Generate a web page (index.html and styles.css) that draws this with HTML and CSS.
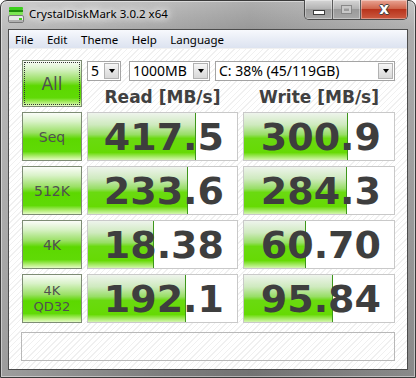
FILE: index.html
```html
<!DOCTYPE html>
<html lang="en">

<head>
    <meta charset="UTF-8">
    <title>CrystalDiskMark 3.0.2 x64</title>
    <link rel="stylesheet" href="styles.css">
</head>

<body>
    <div class="window">
        <div class="titlebar">
            <svg class="app-icon" width="17" height="17" viewBox="0 0 17 17">
                <rect x="1" y="1" width="14" height="3" rx="1" fill="#3ccf1c" />
                <rect x="1" y="4" width="14" height="2" fill="#1e8c0c" />
                <rect x="1" y="6" width="14" height="3" rx="1" fill="#7de654" />
                <rect x="0.5" y="9.5" width="15" height="7" rx="1.5" fill="#e8e8e8" stroke="#777" />
                <rect x="1" y="14" width="14" height="2" fill="#b0b0b0" />
                <rect x="11" y="12" width="3" height="2" fill="#3ccf1c" />
            </svg>
            <span class="title">CrystalDiskMark 3.0.2 x64</span>
            <div class="controls">
                <div class="ctl ctl-min"><span class="ico-min"></span></div>
                <div class="ctl ctl-max"><span class="ico-max"></span></div>
                <div class="ctl ctl-close"><span class="ico-close">x</span></div>
            </div>
        </div>
        <div class="inner">
            <div class="menubar">
                <span>File</span>
                <span>Edit</span>
                <span>Theme</span>
                <span>Help</span>
                <span>Language</span>
            </div>
            <div class="content">
                <div class="btn btn-all"><span class="focus">All</span></div>
                <div class="selects">
                    <div class="select sel-count"><span class="sel-text">5</span><span class="sel-btn"></span></div>
                    <div class="select sel-size"><span class="sel-text">1000MB</span><span class="sel-btn"></span></div>
                    <div class="select sel-drive"><span class="sel-text">C: 38% (45/119GB)</span><span class="sel-btn"></span></div>
                </div>
                <div class="head">Read [MB/s]</div>
                <div class="head">Write [MB/s]</div>

                <div class="btn">Seq</div>
                <div class="cell" style="--w:108px">417.5</div>
                <div class="cell" style="--w:104px">300.9</div>

                <div class="btn">512K</div>
                <div class="cell" style="--w:100px">233.6</div>
                <div class="cell" style="--w:103px">284.3</div>

                <div class="btn">4K</div>
                <div class="cell" style="--w:66px">18.38</div>
                <div class="cell" style="--w:62px">60.70</div>

                <div class="btn btn-small">4K<br>QD32</div>
                <div class="cell" style="--w:98px">192.1</div>
                <div class="cell" style="--w:89px">95.84</div>

                <div class="status"></div>
            </div>
        </div>
    </div>
</body>

</html>
```

FILE: styles.css
```css
body {
    margin: 0;
    background: #fff;
    font-family: 'Noto Sans', 'DejaVu Sans', sans-serif;
}

.window {
    width: 416px;
    height: 378px;
    box-sizing: border-box;
    border: 1px solid #3a3a3a;
    border-radius: 7px 7px 0 0;
    padding: 0 7px 7px;
    display: flex;
    flex-direction: column;
    background:
        linear-gradient(to right, rgba(255, 255, 255, 0.25), rgba(255, 255, 255, 0) 40%, rgba(0, 0, 0, 0.08) 60%, rgba(255, 255, 255, 0.1)),
        linear-gradient(#bdbdbd, #a4a4a4 30px, #8e8e8e 60%, #7c7c7c);
    box-shadow: inset 0 0 0 1px rgba(255, 255, 255, 0.45);
}

.titlebar {
    height: 28px;
    display: flex;
    align-items: flex-start;
}

.app-icon {
    margin-top: 5px;
    margin-right: 4px;
}

.title {
    margin-top: 5px;
    font-size: 11.5px;
    color: #000;
    text-shadow: 0 0 6px #fff, 0 0 10px #fff, 0 0 14px #fff;
}

.controls {
    margin-left: auto;
    margin-top: -1px;
    display: flex;
    height: 19px;
    border: 1px solid #4a4a4a;
    border-top: none;
    border-radius: 0 0 5px 5px;
    overflow: hidden;
}

.ctl {
    display: flex;
    align-items: center;
    justify-content: center;
    box-shadow: inset 0 0 0 1px rgba(255, 255, 255, 0.35);
}

.ctl-min,
.ctl-max {
    width: 27px;
    background: linear-gradient(#d6d6d6, #b4b4b4 45%, #9a9a9a 50%, #a8a8a8);
    border-right: 1px solid #5a5a5a;
}

.ctl-close {
    width: 46px;
    background: linear-gradient(#e9a594, #d0664c 45%, #b8341c 50%, #cc5a40);
}

.ico-min {
    width: 10px;
    height: 3px;
    margin-top: 6px;
    background: #fff;
    border: 1px solid #3c3c3c;
}

.ico-max {
    width: 9px;
    height: 7px;
    border: 1px solid #888;
    box-shadow: inset 0 0 0 2px #c8c8c8;
}

.ico-close {
    font-family: 'DejaVu Sans', sans-serif;
    font-weight: bold;
    font-size: 15px;
    line-height: 15px;
    color: #fff;
    text-shadow: 1px 0 0 #444, -1px 0 0 #444, 0 1px 0 #444, 0 -1px 0 #444;
}

.inner {
    flex: 1;
    border: 1px solid #4c4c4c;
    display: flex;
    flex-direction: column;
}

.menubar {
    height: 18px;
    display: flex;
    align-items: center;
    gap: 13.5px;
    padding-left: 6px;
    font-size: 11.5px;
    color: #000;
    background: linear-gradient(#f7f9fd, #e9edf6 50%, #dce3f0);
    border-bottom: 1px solid #f0f0f0;
}

.content {
    flex: 1;
    padding: 11px 0 0 13px;
    display: grid;
    grid-template-columns: 60px 151px 152px;
    grid-template-rows: 21px 21px 49px 49px 49px 49px 29px;
    gap: 5px;
    align-content: start;
    background: repeating-linear-gradient(135deg, #fff 0 3px, #f0f0f0 3px 4px);
}

.btn {
    box-sizing: border-box;
    border: 1px solid #7d8c74;
    display: flex;
    align-items: center;
    justify-content: center;
    text-align: center;
    font-family: 'DejaVu Sans', sans-serif;
    font-size: 14px;
    color: #505050;
    background: linear-gradient(#fbfdf9, #d9f2c8 18%, #9ae064 42%, #5cd800 55%, #60da06 82%, #b6ee7a 93%, #e4fcc6);
}

.btn-all {
    grid-row: 1 / 3;
    font-size: 17px;
    padding: 1px;
}

.focus {
    width: 100%;
    height: 100%;
    box-sizing: border-box;
    border: 1px dotted #333;
    display: flex;
    align-items: center;
    justify-content: center;
}

.btn-small {
    font-size: 13px;
    line-height: 16px;
}

.selects {
    grid-column: 2 / 4;
    display: flex;
    margin-top: 1px;
}

.select {
    height: 20px;
    box-sizing: border-box;
    border: 1px solid #a4a4a4;
    background: #fff;
    display: flex;
    align-items: center;
    padding: 1px;
}

.sel-count {
    width: 34px;
    margin-right: 8px;
}

.sel-size {
    width: 81px;
    margin-right: 5px;
}

.sel-drive {
    width: 180px;
}

.sel-text {
    flex: 1;
    padding-left: 2px;
    font-size: 14px;
    line-height: 16px;
    color: #000;
    white-space: nowrap;
}

.sel-btn {
    width: 15px;
    height: 16px;
    box-sizing: border-box;
    border: 1px solid #b2b2b2;
    background: linear-gradient(#f6f6f6, #e6e6e6 50%, #d8d8d8);
    display: flex;
    align-items: center;
    justify-content: center;
}

.sel-btn::after {
    content: "";
    border-left: 3.5px solid transparent;
    border-right: 3.5px solid transparent;
    border-top: 4px solid #000;
}

.head {
    display: flex;
    align-items: center;
    justify-content: center;
    font-family: 'DejaVu Sans', sans-serif;
    font-weight: bold;
    font-size: 17px;
    color: #404040;
}

.cell {
    box-sizing: border-box;
    border: 1px solid #c9c9c9;
    display: flex;
    align-items: center;
    justify-content: flex-end;
    padding-right: 13px;
    font-family: 'DejaVu Sans', sans-serif;
    font-weight: bold;
    font-size: 38px;
    color: #3e3e3e;
    background:
        linear-gradient(#3d961a, #3d961a) no-repeat calc(var(--w) - 1px) 0 / 1px 100%,
        linear-gradient(#eef4ec, #cfeabf 25%, #98de66 46%, #6ada10 54%, #66da04 84%, #9ee85a 92%, #d4f6b0) no-repeat 0 0 / var(--w) 100%,
        #fff;
}

.status {
    grid-column: 1 / 4;
    margin-top: 4px;
    height: 29px;
    margin-left: -1px;
    box-sizing: border-box;
    border: 1px solid #b8b8b8;
}
```
